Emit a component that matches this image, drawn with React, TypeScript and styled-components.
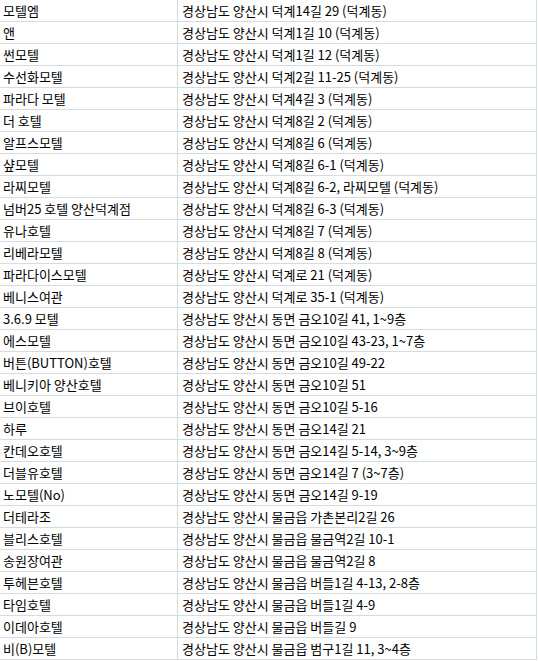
import styled, { createGlobalStyle } from "styled-components";

const GlobalStyle = createGlobalStyle`
    body {
        margin: 0;
        background: #ffffff;
        font-family: "Noto Sans CJK KR", "Noto Sans", sans-serif;
        color: #000000;
    }
`;

const rows: [string, string][] = [
    ["모텔엠", "경상남도 양산시 덕계14길 29 (덕계동)"],
    ["앤", "경상남도 양산시 덕계1길 10 (덕계동)"],
    ["썬모텔", "경상남도 양산시 덕계1길 12 (덕계동)"],
    ["수선화모텔", "경상남도 양산시 덕계2길 11-25 (덕계동)"],
    ["파라다 모텔", "경상남도 양산시 덕계4길 3 (덕계동)"],
    ["더 호텔", "경상남도 양산시 덕계8길 2 (덕계동)"],
    ["알프스모텔", "경상남도 양산시 덕계8길 6 (덕계동)"],
    ["샾모텔", "경상남도 양산시 덕계8길 6-1 (덕계동)"],
    ["라찌모텔", "경상남도 양산시 덕계8길 6-2, 라찌모텔 (덕계동)"],
    ["넘버25 호텔 양산덕계점", "경상남도 양산시 덕계8길 6-3 (덕계동)"],
    ["유나호텔", "경상남도 양산시 덕계8길 7 (덕계동)"],
    ["리베라모텔", "경상남도 양산시 덕계8길 8 (덕계동)"],
    ["파라다이스모텔", "경상남도 양산시 덕계로 21 (덕계동)"],
    ["베니스여관", "경상남도 양산시 덕계로 35-1 (덕계동)"],
    ["3.6.9 모텔", "경상남도 양산시 동면 금오10길 41, 1~9층"],
    ["에스모텔", "경상남도 양산시 동면 금오10길 43-23, 1~7층"],
    ["버튼(BUTTON)호텔", "경상남도 양산시 동면 금오10길 49-22"],
    ["베니키아 양산호텔", "경상남도 양산시 동면 금오10길 51"],
    ["브이호텔", "경상남도 양산시 동면 금오10길 5-16"],
    ["하루", "경상남도 양산시 동면 금오14길 21"],
    ["칸데오호텔", "경상남도 양산시 동면 금오14길 5-14, 3~9층"],
    ["더블유호텔", "경상남도 양산시 동면 금오14길 7 (3~7층)"],
    ["노모텔(No)", "경상남도 양산시 동면 금오14길 9-19"],
    ["더테라조", "경상남도 양산시 물금읍 가촌본리2길 26"],
    ["블리스호텔", "경상남도 양산시 물금읍 물금역2길 10-1"],
    ["송원장여관", "경상남도 양산시 물금읍 물금역2길 8"],
    ["투헤븐호텔", "경상남도 양산시 물금읍 버들1길 4-13, 2-8층"],
    ["타임호텔", "경상남도 양산시 물금읍 버들1길 4-9"],
    ["이데아호텔", "경상남도 양산시 물금읍 버들길 9"],
    ["비(B)모텔", "경상남도 양산시 물금읍 범구1길 11, 3~4층"],
];

const Sheet = styled.div`
    width: 537px;
    display: flex;
    flex-direction: column;
`;

const Row = styled.div`
    display: grid;
    grid-template-columns: 178px 1fr;
    height: 22px;
    border-bottom: 1px solid #d6dbe2;
    box-sizing: border-box;
`;

const Cell = styled.div<{ $last?: boolean }>`
    display: flex;
    align-items: center;
    padding-left: ${({ $last }) => ($last ? "4px" : "3px")};
    border-right: 1px solid #d6dbe2;
    font-size: 13px;
    white-space: nowrap;
    overflow: hidden;
    box-sizing: border-box;
`;

const App = () => (
    <>
        <GlobalStyle />
        <Sheet>
            {rows.map(([name, address]) => (
                <Row key={name}>
                    <Cell>{name}</Cell>
                    <Cell $last>{address}</Cell>
                </Row>
            ))}
        </Sheet>
    </>
);

export default App;
